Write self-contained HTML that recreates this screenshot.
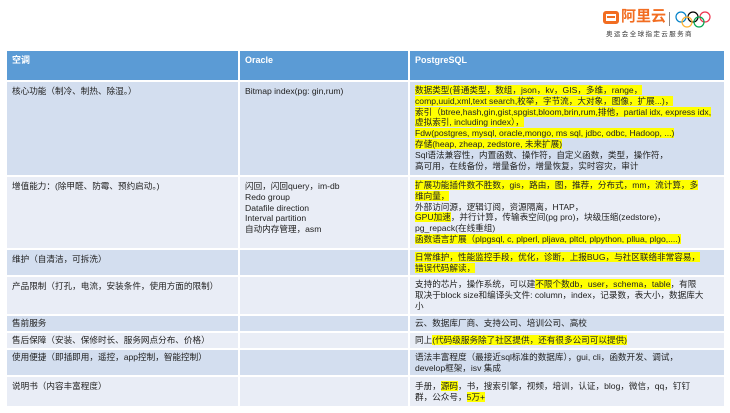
<!DOCTYPE html>
<html><head><meta charset="utf-8"><style>
*{margin:0;padding:0;box-sizing:border-box}
body{width:730px;height:413px;background:#fff;position:relative;overflow:hidden;font-family:"Liberation Sans","Noto Sans CJK SC",sans-serif;font-size:8.6px;color:#222;line-height:10.8px}
.c{position:absolute;padding:4px 5px;overflow:hidden}
.h{background:#5b9bd5;color:#fff;font-weight:bold;font-size:9px}
.a{background:#d3deef}
.b{background:#e9edf6}
.y{background:#ffff00}
.n{white-space:nowrap}
</style></head><body>
<div style="position:absolute;left:603px;top:11px;width:16px;height:13px;border:3px solid #f26d21;border-radius:3px"></div>
<div style="position:absolute;left:606px;top:16px;width:10px;height:3px;background:#fff"></div>
<div style="position:absolute;left:607px;top:16px;width:8px;height:2px;background:#f26d21"></div>
<div style="position:absolute;left:621px;top:8px;font-size:15px;line-height:18px;color:#f26d21;font-weight:bold">阿里云</div>
<div style="position:absolute;left:669px;top:12px;width:1px;height:14px;background:#888"></div>
<svg style="position:absolute;left:675px;top:10px" width="36" height="20" viewBox="0 0 36 20" fill="none" stroke-width="1.2">
<circle cx="6" cy="7" r="5" stroke="#0081c8"/><circle cx="18" cy="7" r="5" stroke="#000"/><circle cx="30" cy="7" r="5" stroke="#ee334e"/>
<circle cx="12" cy="12" r="5" stroke="#fcb131"/><circle cx="24" cy="12" r="5" stroke="#00a651"/></svg>
<div style="position:absolute;left:606px;top:31px;font-size:6.5px;line-height:8px;letter-spacing:1.4px;color:#333">奥运会全球指定云服务商</div>

<div class="c h" style="left:7px;top:51px;width:231px;height:29px">空调</div>
<div class="c h" style="left:240px;top:51px;width:168px;height:29px">Oracle</div>
<div class="c h" style="left:410px;top:51px;width:314px;height:29px">PostgreSQL</div>

<div class="c a" style="left:7px;top:82px;width:231px;height:93px">核心功能（制冷、制热、除湿。）</div>
<div class="c a" style="left:240px;top:82px;width:168px;height:93px">Bitmap index(pg: gin,rum)</div>
<div class="c a n" style="left:410px;top:82px;width:314px;height:93px;padding-top:3px"><span class="y">数据类型(普通类型，数组，json，kv，GIS，多维，range，<br>comp,uuid,xml,text search,枚举，字节流，大对象，图像，扩展...)，<br>索引（btree,hash,gin,gist,spgist,bloom,brin,rum,排他，partial idx, express idx,<br>虚拟索引, including index），<br>Fdw(postgres, mysql, oracle,mongo, ms sql, jdbc, odbc, Hadoop, ...)<br>存储(heap, zheap, zedstore, 未来扩展)</span><br>Sql语法兼容性，内置函数、操作符，自定义函数，类型，操作符，<br>高可用，在线备份，增量备份，增量恢复，实时容灾，审计</div>

<div class="c b" style="left:7px;top:177px;width:231px;height:71px">增值能力：(除甲醛、防霉、预约启动。)</div>
<div class="c b" style="left:240px;top:177px;width:168px;height:71px">闪回，闪回query，im-db<br>Redo group<br>Datafile direction<br>Interval partition<br>自动内存管理，asm</div>
<div class="c b n" style="left:410px;top:177px;width:314px;height:71px;padding-top:3px"><span class="y">扩展功能插件数不胜数，gis，路由，图，推荐，分布式，mm，流计算，多<br>维向量，</span><br>外部访问源，逻辑订阅，资源隔离，HTAP，<br><span class="y">GPU加速</span>，并行计算，传输表空间(pg pro)，块级压缩(zedstore)，<br>pg_repack(在线重组)<br><span class="y">函数语言扩展（plpgsql, c, plperl, pljava, pltcl, plpython, pllua, plgo,....)</span></div>

<div class="c a" style="left:7px;top:250px;width:231px;height:25px">维护（自清洁，可拆洗）</div>
<div class="c a" style="left:240px;top:250px;width:168px;height:25px"></div>
<div class="c a n" style="left:410px;top:250px;width:314px;height:25px;padding-top:2px"><span class="y">日常维护，性能监控手段，优化，诊断，上报BUG，与社区联络非常容易，<br>错误代码解读，</span></div>

<div class="c b" style="left:7px;top:277px;width:231px;height:37px">产品限制（打孔，电流，安装条件，使用方面的限制）</div>
<div class="c b" style="left:240px;top:277px;width:168px;height:37px"></div>
<div class="c b n" style="left:410px;top:277px;width:314px;height:37px;padding-top:2px">支持的芯片，操作系统，可以建<span class="y">不限个数db，user，schema，table</span>，有限<br>取决于block size和编译头文件: column，index，记录数，表大小，数据库大<br>小</div>

<div class="c a" style="left:7px;top:316px;width:231px;height:15px;padding-top:2px">售前服务</div>
<div class="c a" style="left:240px;top:316px;width:168px;height:15px"></div>
<div class="c a" style="left:410px;top:316px;width:314px;height:15px;padding-top:2px">云、数据库厂商、支持公司、培训公司、高校</div>

<div class="c b" style="left:7px;top:333px;width:231px;height:15px;padding-top:2px">售后保障（安装、保修时长、服务网点分布、价格）</div>
<div class="c b" style="left:240px;top:333px;width:168px;height:15px"></div>
<div class="c b" style="left:410px;top:333px;width:314px;height:15px;padding-top:2px">同上<span class="y">(代码级服务除了社区提供，还有很多公司可以提供)</span></div>

<div class="c a" style="left:7px;top:350px;width:231px;height:25px;padding-top:2px">使用便捷（即插即用，遥控，app控制，智能控制）</div>
<div class="c a" style="left:240px;top:350px;width:168px;height:25px"></div>
<div class="c a n" style="left:410px;top:350px;width:314px;height:25px;padding-top:2px">语法丰富程度（最接近sql标准的数据库），gui, cli，函数开发、调试，<br>develop框架，isv 集成</div>

<div class="c b" style="left:7px;top:377px;width:231px;height:29px">说明书（内容丰富程度）</div>
<div class="c b" style="left:240px;top:377px;width:168px;height:29px"></div>
<div class="c b n" style="left:410px;top:377px;width:314px;height:29px">手册，<span class="y">源码</span>，书，搜索引擎，视频，培训，认证，blog，微信，qq，钉钉<br>群，公众号，<span class="y">5万+</span></div>
</body></html>
